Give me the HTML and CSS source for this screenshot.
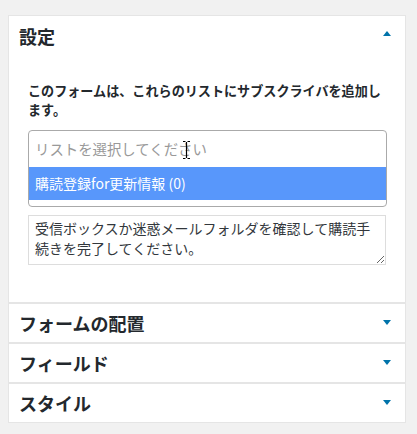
FILE: index.html
```html
<!DOCTYPE html>
<html lang="ja">
<head>
<meta charset="utf-8">
<link rel="stylesheet" href="styles.css">
</head>
<body>
<div class="panels">
  <section class="panel open">
    <div class="panel-head">
      <h2 class="panel-title">設定</h2>
      <span class="arrow up"></span>
    </div>
    <div class="panel-body">
      <p class="desc">このフォームは、これらのリストにサブスクライバを追加します。</p>
      <div class="select">
        <div class="select-search">
          <span class="placeholder">リストを選択してください</span>
          <svg class="ibeam" width="9" height="20" viewBox="0 0 9 20"><path d="M1 1.5h2.5M5.5 1.5H8M4.5 2v16M1 18.5h2.5M5.5 18.5H8" stroke="#000" stroke-width="1.2" fill="none"/></svg>
        </div>
        <div class="select-option">購読登録for更新情報 (0)</div>
        <div class="select-foot"></div>
      </div>
      <textarea class="message">受信ボックスか迷惑メールフォルダを確認して購読手続きを完了してください。</textarea>
    </div>
  </section>
  <section class="panel">
    <div class="panel-head">
      <h2 class="panel-title">フォームの配置</h2>
      <span class="arrow down"></span>
    </div>
  </section>
  <section class="panel">
    <div class="panel-head">
      <h2 class="panel-title">フィールド</h2>
      <span class="arrow down"></span>
    </div>
  </section>
  <section class="panel">
    <div class="panel-head">
      <h2 class="panel-title">スタイル</h2>
      <span class="arrow down"></span>
    </div>
  </section>
</div>
</body>
</html>
```

FILE: styles.css
```css
html, body {
  margin: 0;
  padding: 0;
}
body {
  background: #f1f1f1;
  padding: 15px 11px 0 8px;
  font-family: "Noto Sans CJK JP", "Noto Sans", sans-serif;
  color: #23282d;
}
.panels {
  width: 398px;
  box-sizing: border-box;
  background: #e5e5e5;
  padding: 1px;
  display: flex;
  flex-direction: column;
  gap: 2px;
}
.panel {
  background: #fff;
}
.panel-head {
  height: 38px;
  display: flex;
  align-items: center;
  justify-content: space-between;
  padding: 0 14px 0 10px;
  position: relative;
}
.panel.open .panel-head {
  height: 40px;
}
.panel-title {
  margin: 0;
  font-size: 18px;
  font-weight: 700;
  line-height: 24px;
  color: #23282d;
}
.arrow {
  width: 0;
  height: 0;
  border-left: 4px solid transparent;
  border-right: 4px solid transparent;
}
.arrow.down {
  border-top: 5px solid #0073aa;
  margin-top: -1px;
}
.arrow.up {
  border-bottom: 5px solid #0073aa;
  margin-top: -5px;
}
.panel-body {
  padding: 25px 18px 37px 19px;
}
.desc {
  margin: 0;
  font-size: 13.1px;
  font-weight: 700;
  line-height: 19px;
  color: #23282d;
}
.select {
  margin-top: 11px;
  border: 1px solid #aaa;
  border-radius: 4px;
  overflow: hidden;
  background: #fff;
}
.select-search {
  height: 36px;
  display: flex;
  align-items: center;
  padding: 0 6px;
  position: relative;
}
.placeholder {
  font-size: 14.4px;
  color: #999;
  line-height: 20px;
}
.ibeam {
  position: absolute;
  left: 153px;
  top: 9px;
}
.select-option {
  height: 33px;
  background: #5897fb;
  color: #fff;
  font-size: 14px;
  line-height: 33px;
  padding: 0 6px;
}
.select-foot {
  height: 6px;
}
.message {
  display: block;
  margin-top: 8px;
  width: 358px;
  height: 50px;
  box-sizing: border-box;
  border: 1px solid #ddd;
  border-radius: 0;
  padding: 2px 6px;
  font-family: "Noto Sans CJK JP", "Noto Sans", sans-serif;
  font-size: 14px;
  line-height: 20px;
  color: #32373c;
  resize: vertical;
  overflow: hidden;
}
```
